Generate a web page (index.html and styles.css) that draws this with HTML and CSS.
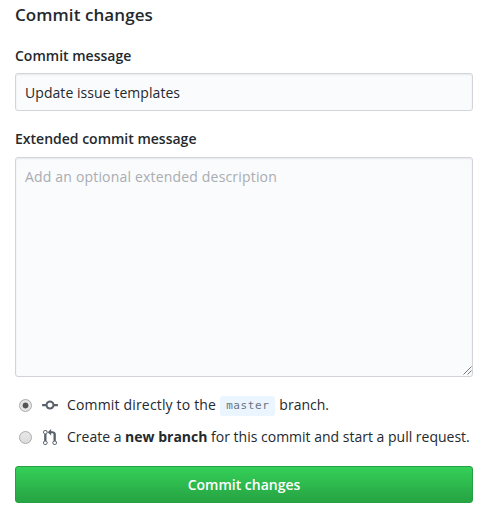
FILE: index.html
```html
<!DOCTYPE html>
<html lang="en">
<head>
<meta charset="utf-8">
<title>Commit changes</title>
<link rel="stylesheet" href="styles.css">
</head>
<body>
<form class="commit-form">
  <h3 class="title">Commit changes</h3>
  <label class="label label-message" for="message">Commit message</label>
  <input class="field message" id="message" type="text" value="Update issue templates">
  <label class="label label-extended" for="extended">Extended commit message</label>
  <div class="extended-wrap">
    <textarea class="field extended" id="extended" placeholder="Add an optional extended description"></textarea>
    <svg class="grip" viewBox="0 0 9 9"><path d="M.5 8.5l8-8M4.500 8.500l4-4"/></svg>
  </div>
  <label class="choice">
    <input class="radio" type="radio" name="target" checked>
    <svg class="icon" viewBox="0 0 14 16"><path d="M10.860 7c-.45-1.720-2-3-3.860-3-1.860 0-3.410 1.280-3.860 3H0v2h3.140c.45 1.720 2 3 3.860 3 1.860 0 3.410-1.280 3.860-3H14V7h-3.140zM7 10.200c-1.220 0-2.200-.98-2.200-2.200 0-1.220.98-2.200 2.200-2.200 1.220 0 2.200.98 2.200 2.200 0 1.220-.98 2.200-2.200 2.200z"/></svg>
    <span class="choice-text direct">Commit directly to the</span>
    <code class="branch">master</code>
    <span class="choice-text after">branch.</span>
  </label>
  <label class="choice">
    <input class="radio" type="radio" name="target">
    <svg class="icon icon-pr" viewBox="0 0 12 16" preserveAspectRatio="none"><path d="M11 11.280V5c-.03-.78-.34-1.470-.94-2.060C9.460 2.350 8.780 2.030 8 2H7V0L4 3l3 3V4h1c.27.02.48.11.69.31.21.2.3.42.31.69v6.280A1.993 1.993 0 0 0 10 15a1.993 1.993 0 0 0 1-3.720zm-1 2.920c-.66 0-1.200-.55-1.200-1.200 0-.65.55-1.200 1.200-1.200.65 0 1.200.55 1.200 1.200 0 .65-.55 1.200-1.200 1.200zM4 3c0-1.110-.89-2-2-2a1.993 1.993 0 0 0-1 3.720v6.560A1.993 1.993 0 0 0 2 15a1.993 1.993 0 0 0 1-3.720V4.720c.59-.34 1-.98 1-1.720zm-.8 10c0 .66-.55 1.200-1.200 1.200-.65 0-1.200-.55-1.200-1.200 0-.65.55-1.200 1.200-1.200.65 0 1.200.55 1.200 1.200zM2 4.200C1.340 4.200.8 3.650.8 3c0-.65.55-1.200 1.200-1.200.65 0 1.200.55 1.200 1.200 0 .65-.55 1.200-1.200 1.200z"/></svg>
    <span class="choice-text create">Create a <b>new branch</b> for this commit and start a pull request.</span>
  </label>
  <button class="submit" type="button">Commit changes</button>
</form>
</body>
</html>
```

FILE: styles.css
```css
* {
  box-sizing: border-box;
}

body {
  margin: 0;
  background: #fff;
  color: #24292e;
  font: 14px/20px "Open Sans", "Noto Sans", sans-serif;
}

.commit-form {
  display: flex;
  flex-direction: column;
  width: 458px;
  margin-left: 15px;
  padding-top: 3px;
}

.title {
  margin: 0;
  font-size: 17px;
  line-height: 24px;
  font-weight: 600;
  letter-spacing: 0.07px;
  white-space: nowrap;
}

.label {
  font-weight: 600;
  line-height: 20px;
}

.label-message {
  margin-top: 19px;
}

.label-extended {
  margin-top: 18px;
}

.field {
  display: block;
  width: 100%;
  border: 1px solid #d1d5da;
  border-radius: 3px;
  background: #fafbfc;
  box-shadow: inset 0 1px 2px rgba(27, 31, 35, 0.075);
  color: #24292e;
  font: inherit;
  outline: 0;
}

.message {
  height: 38px;
  margin-top: 7px;
  padding: 0 9px;
  letter-spacing: 0.06px;
}

.extended-wrap {
  position: relative;
  margin-top: 8px;
}

.extended {
  height: 220px;
  padding: 9px;
  letter-spacing: 0.18px;
  resize: none;
}

.extended::placeholder {
  color: #a9adb2;
}

.grip {
  position: absolute;
  right: 1px;
  bottom: 2px;
  width: 9px;
  height: 9px;
  fill: none;
  stroke: #555;
  stroke-width: 0.8;
}

.choice {
  display: flex;
  align-items: center;
  height: 32px;
  white-space: nowrap;
}

.extended-wrap + .choice {
  margin-top: 12px;
}

.direct {
  letter-spacing: 0.17px;
}

.radio {
  appearance: none;
  width: 13px;
  height: 13px;
  margin: 0 10px 0 4px;
  border: 1px solid #aaa;
  border-radius: 50%;
  background: linear-gradient(#e8e8e8, #dcdcdc);
}

.radio:checked {
  background: radial-gradient(circle, #555 0 2.6px, #e6e6e6 3.300px);
}

.icon {
  width: 16px;
  height: 18px;
  margin-right: 9px;
  fill: #586069;
}

.icon-pr {
  width: 14px;
  height: 17px;
  margin: 0 10px 0 1px;
}

.branch {
  height: 20px;
  margin: 1px 4px 0;
  padding: 0 6px;
  border-radius: 3px;
  background: #eaf5ff;
  color: #6a737d;
  font: 11px/20px "DejaVu Sans Mono", monospace;
  letter-spacing: 0.58px;
}

.submit {
  height: 37px;
  margin-top: 13px;
  padding: 0;
  border: 1px solid #279f43;
  border-radius: 3px;
  background: linear-gradient(#34d058, #28a745 90%);
  color: #fff;
  font: inherit;
  font-weight: 600;
}
```
